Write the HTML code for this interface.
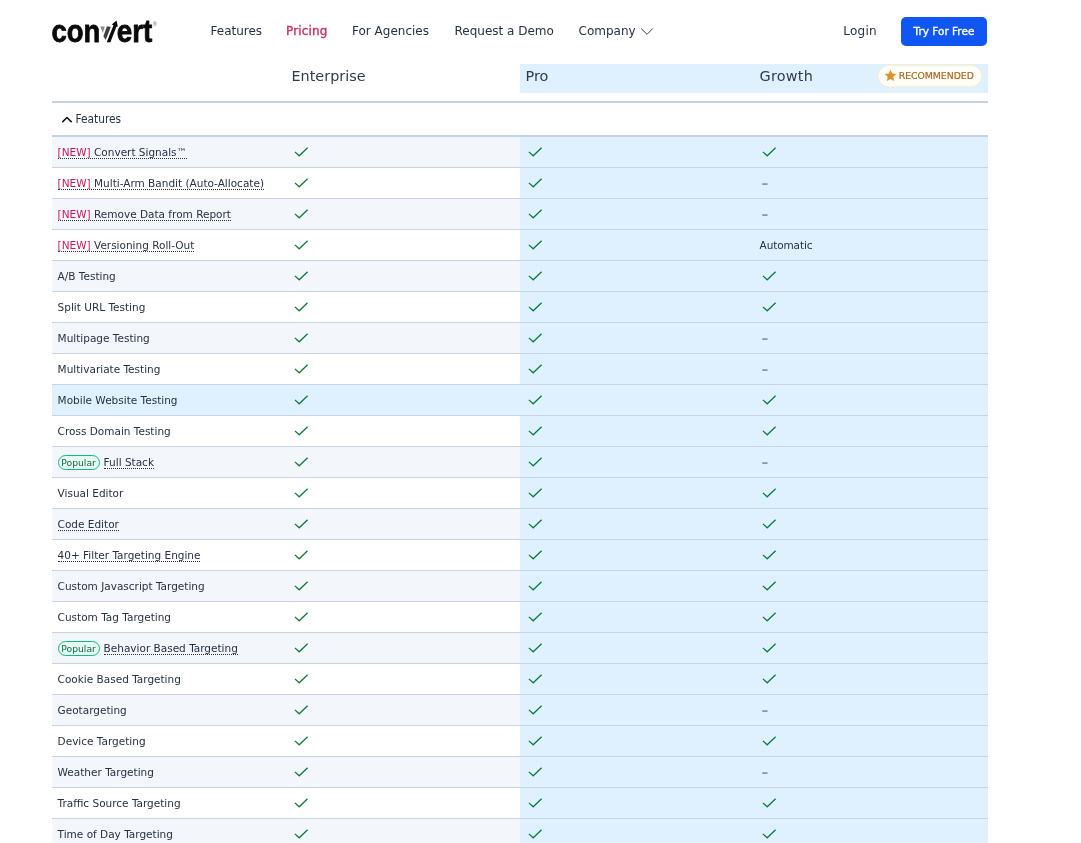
<!DOCTYPE html>
<html lang="en">
<head>
<meta charset="utf-8">
<title>Convert Pricing</title>
<style>
*{box-sizing:border-box;margin:0;padding:0}
html,body{width:1081px;height:843px;overflow:hidden;background:#fff}
body{font-family:"DejaVu Sans","Liberation Sans",sans-serif;color:#1f2937;position:relative}
.nav{position:absolute;left:0;top:0;width:1081px;height:64px}
.logo{position:absolute;left:45px;top:12px;width:120px;height:40px}
.logo text{font-family:"Liberation Sans",sans-serif;font-weight:700;fill:#0a0a0a;stroke:#0a0a0a;stroke-width:.8px;stroke-linejoin:round}
.nav a{position:absolute;top:22px;font-size:12px;line-height:18px;color:#273142;text-decoration:none;white-space:nowrap}
.nav a.act{color:#c82e5e;-webkit-text-stroke:.35px #c82e5e;letter-spacing:.15px}
.chev{position:absolute;left:640px;top:27px;width:14px;height:9px;fill:none;stroke:#374151;stroke-width:1}
.btn{position:absolute;left:901px;top:17px;width:86px;height:29px;border-radius:5px;background:#0f56f3;color:#fff;font-size:10.5px;line-height:29px;text-align:center;-webkit-text-stroke:.35px #fff}
.hdr{position:absolute;left:52px;top:64px;width:936px;height:29px;display:flex}
.hdr div{width:234px;height:29px;padding-left:5.5px;font-size:14.4px;line-height:24px;color:#323b49}
.hdr .b{background:#dff1fe}
.rec{position:absolute;left:878px;top:65px;width:104px;height:22px;border-radius:11px;background:#fffef9;border:1px solid #fdf1c5;color:#a8621a;font-size:9.3px;line-height:20px;padding-left:19.7px;white-space:nowrap;-webkit-text-stroke:.15px #a8621a}
.rec svg{position:absolute;left:4.6px;top:2.6px;width:13px;height:13px;fill:#e0922a}
.tbl{position:absolute;left:52px;top:101px;width:936px}
.nav,.hdr,.rec,.tbl{will-change:transform}
.sec{height:36px;border-top:2px solid #c6d2e1;border-bottom:2px solid #c6d2e1;font-family:"DejaVu Sans Condensed","DejaVu Sans",sans-serif;font-size:11.8px;line-height:32px;padding-left:23.5px;position:relative;color:#273142}
.sec svg{position:absolute;left:9px;top:13px;width:12px;height:8px;fill:none;stroke:#111;stroke-width:1.5}
.r{display:flex;height:31px;border-bottom:1px solid #c9d3e0;position:relative}
.r.alt{background:#f3f6fb}
.c{width:234px;height:30px;padding-left:5.6px;font-size:10.5px;line-height:30px;white-space:nowrap;color:#273142}
.c.b{background:#dff1fe}
.r.hov{background:#dff1fe}
.ck{width:16px;height:16px;display:block;margin-top:7px;margin-left:1.4px;fill:none;stroke:#0c7a3e;stroke-width:1.25;stroke-linecap:butt;stroke-linejoin:miter}
.dash{color:#8d97a6;padding-left:2px;font-weight:700;font-size:13.5px;position:relative;top:0px}
.val{letter-spacing:-.12px}
.tip{border-bottom:1px dotted #273142}
.new{color:#c2185b}
.pop{display:inline-block;width:42px;height:15px;line-height:14px;border:1px solid #10b981;border-radius:8px;background:#e6faf1;color:#17634a;font-size:9.2px;text-align:center;margin-right:4px;vertical-align:0px}
</style>
</head>
<body>
<div class="nav">
  <svg class="logo" viewBox="0 0 120 40" aria-label="convert">
    <text x="6.5" y="30" font-size="31.5" textLength="48.8" lengthAdjust="spacingAndGlyphs">con</text>
    <text x="56" y="30" font-size="31.5" style="fill:none;stroke:none">v</text>
    <polygon points="55.3,14.6 59.7,14.6 57.8,21" fill="#8a8a8a"/>
    <polygon points="62,14.2 65.8,15 60.8,27.8 58.4,24.2" fill="#3f3f3f"/>
    <polygon points="61.7,30.2 65.4,30.2 71.3,15 72.8,14.5 71.5,8.5 66.8,12.5 68.5,13.3" fill="#0a0a0a"/>
    <text x="71.8" y="30" font-size="31.5" textLength="35.6" lengthAdjust="spacingAndGlyphs">ert</text>
    <text x="108" y="14" font-size="5" style="font-weight:400;fill:#555;stroke:none">®</text>
  </svg>
  <a style="left:210.5px">Features</a>
  <a class="act" style="left:286px">Pricing</a>
  <a style="left:352px">For Agencies</a>
  <a style="left:454.5px">Request a Demo</a>
  <a style="left:578.5px">Company</a>
  <svg class="chev" viewBox="0 0 14 9"><path d="M1.2 1.5 L7 7.3 L12.8 1.5"/></svg>
  <a style="left:843.3px;letter-spacing:.25px">Login</a>
  <div class="btn">Try For Free</div>
</div>
<div class="hdr"><div></div><div>Enterprise</div><div class="b">Pro</div><div class="b" style="letter-spacing:.25px">Growth</div></div>
<div class="rec"><svg viewBox="0 0 24 24"><path d="M12 1.5l3.2 6.9 7.5.9-5.5 5.2 1.4 7.5L12 18.3 5.4 22l1.4-7.5L1.3 9.3l7.5-.9z"/></svg>RECOMMENDED</div>
<div class="tbl">
<div class="sec"><svg viewBox="0 0 12 8"><path d="M1.3 6.1 L6 1.5 L10.7 6.1"/></svg>Features</div>
<div class="r alt"><div class="c c1"><span class="tip"><span class="new">[NEW]</span> Convert Signals™</span></div><div class="c"><svg class="ck" viewBox="0 0 16 16"><path d="M1.9 7.9 L6.2 11.8 L14.6 3.7"/></svg></div><div class="c b"><svg class="ck" viewBox="0 0 16 16"><path d="M1.9 7.9 L6.2 11.8 L14.6 3.7"/></svg></div><div class="c b"><svg class="ck" viewBox="0 0 16 16"><path d="M1.9 7.9 L6.2 11.8 L14.6 3.7"/></svg></div></div>
<div class="r"><div class="c c1"><span class="tip"><span class="new">[NEW]</span> Multi-Arm Bandit (Auto-Allocate)</span></div><div class="c"><svg class="ck" viewBox="0 0 16 16"><path d="M1.9 7.9 L6.2 11.8 L14.6 3.7"/></svg></div><div class="c b"><svg class="ck" viewBox="0 0 16 16"><path d="M1.9 7.9 L6.2 11.8 L14.6 3.7"/></svg></div><div class="c b"><span class="dash">–</span></div></div>
<div class="r alt"><div class="c c1"><span class="tip"><span class="new">[NEW]</span> Remove Data from Report</span></div><div class="c"><svg class="ck" viewBox="0 0 16 16"><path d="M1.9 7.9 L6.2 11.8 L14.6 3.7"/></svg></div><div class="c b"><svg class="ck" viewBox="0 0 16 16"><path d="M1.9 7.9 L6.2 11.8 L14.6 3.7"/></svg></div><div class="c b"><span class="dash">–</span></div></div>
<div class="r"><div class="c c1"><span class="tip"><span class="new">[NEW]</span> Versioning Roll-Out</span></div><div class="c"><svg class="ck" viewBox="0 0 16 16"><path d="M1.9 7.9 L6.2 11.8 L14.6 3.7"/></svg></div><div class="c b"><svg class="ck" viewBox="0 0 16 16"><path d="M1.9 7.9 L6.2 11.8 L14.6 3.7"/></svg></div><div class="c b"><span class="val">Automatic</span></div></div>
<div class="r alt"><div class="c c1">A/B Testing</div><div class="c"><svg class="ck" viewBox="0 0 16 16"><path d="M1.9 7.9 L6.2 11.8 L14.6 3.7"/></svg></div><div class="c b"><svg class="ck" viewBox="0 0 16 16"><path d="M1.9 7.9 L6.2 11.8 L14.6 3.7"/></svg></div><div class="c b"><svg class="ck" viewBox="0 0 16 16"><path d="M1.9 7.9 L6.2 11.8 L14.6 3.7"/></svg></div></div>
<div class="r"><div class="c c1">Split URL Testing</div><div class="c"><svg class="ck" viewBox="0 0 16 16"><path d="M1.9 7.9 L6.2 11.8 L14.6 3.7"/></svg></div><div class="c b"><svg class="ck" viewBox="0 0 16 16"><path d="M1.9 7.9 L6.2 11.8 L14.6 3.7"/></svg></div><div class="c b"><svg class="ck" viewBox="0 0 16 16"><path d="M1.9 7.9 L6.2 11.8 L14.6 3.7"/></svg></div></div>
<div class="r alt"><div class="c c1">Multipage Testing</div><div class="c"><svg class="ck" viewBox="0 0 16 16"><path d="M1.9 7.9 L6.2 11.8 L14.6 3.7"/></svg></div><div class="c b"><svg class="ck" viewBox="0 0 16 16"><path d="M1.9 7.9 L6.2 11.8 L14.6 3.7"/></svg></div><div class="c b"><span class="dash">–</span></div></div>
<div class="r"><div class="c c1">Multivariate Testing</div><div class="c"><svg class="ck" viewBox="0 0 16 16"><path d="M1.9 7.9 L6.2 11.8 L14.6 3.7"/></svg></div><div class="c b"><svg class="ck" viewBox="0 0 16 16"><path d="M1.9 7.9 L6.2 11.8 L14.6 3.7"/></svg></div><div class="c b"><span class="dash">–</span></div></div>
<div class="r alt hov"><div class="c c1">Mobile Website Testing</div><div class="c"><svg class="ck" viewBox="0 0 16 16"><path d="M1.9 7.9 L6.2 11.8 L14.6 3.7"/></svg></div><div class="c b"><svg class="ck" viewBox="0 0 16 16"><path d="M1.9 7.9 L6.2 11.8 L14.6 3.7"/></svg></div><div class="c b"><svg class="ck" viewBox="0 0 16 16"><path d="M1.9 7.9 L6.2 11.8 L14.6 3.7"/></svg></div></div>
<div class="r"><div class="c c1">Cross Domain Testing</div><div class="c"><svg class="ck" viewBox="0 0 16 16"><path d="M1.9 7.9 L6.2 11.8 L14.6 3.7"/></svg></div><div class="c b"><svg class="ck" viewBox="0 0 16 16"><path d="M1.9 7.9 L6.2 11.8 L14.6 3.7"/></svg></div><div class="c b"><svg class="ck" viewBox="0 0 16 16"><path d="M1.9 7.9 L6.2 11.8 L14.6 3.7"/></svg></div></div>
<div class="r alt"><div class="c c1"><span class="pop">Popular</span><span class="tip">Full Stack</span></div><div class="c"><svg class="ck" viewBox="0 0 16 16"><path d="M1.9 7.9 L6.2 11.8 L14.6 3.7"/></svg></div><div class="c b"><svg class="ck" viewBox="0 0 16 16"><path d="M1.9 7.9 L6.2 11.8 L14.6 3.7"/></svg></div><div class="c b"><span class="dash">–</span></div></div>
<div class="r"><div class="c c1">Visual Editor</div><div class="c"><svg class="ck" viewBox="0 0 16 16"><path d="M1.9 7.9 L6.2 11.8 L14.6 3.7"/></svg></div><div class="c b"><svg class="ck" viewBox="0 0 16 16"><path d="M1.9 7.9 L6.2 11.8 L14.6 3.7"/></svg></div><div class="c b"><svg class="ck" viewBox="0 0 16 16"><path d="M1.9 7.9 L6.2 11.8 L14.6 3.7"/></svg></div></div>
<div class="r alt"><div class="c c1"><span class="tip">Code Editor</span></div><div class="c"><svg class="ck" viewBox="0 0 16 16"><path d="M1.9 7.9 L6.2 11.8 L14.6 3.7"/></svg></div><div class="c b"><svg class="ck" viewBox="0 0 16 16"><path d="M1.9 7.9 L6.2 11.8 L14.6 3.7"/></svg></div><div class="c b"><svg class="ck" viewBox="0 0 16 16"><path d="M1.9 7.9 L6.2 11.8 L14.6 3.7"/></svg></div></div>
<div class="r"><div class="c c1"><span class="tip">40+ Filter Targeting Engine</span></div><div class="c"><svg class="ck" viewBox="0 0 16 16"><path d="M1.9 7.9 L6.2 11.8 L14.6 3.7"/></svg></div><div class="c b"><svg class="ck" viewBox="0 0 16 16"><path d="M1.9 7.9 L6.2 11.8 L14.6 3.7"/></svg></div><div class="c b"><svg class="ck" viewBox="0 0 16 16"><path d="M1.9 7.9 L6.2 11.8 L14.6 3.7"/></svg></div></div>
<div class="r alt"><div class="c c1">Custom Javascript Targeting</div><div class="c"><svg class="ck" viewBox="0 0 16 16"><path d="M1.9 7.9 L6.2 11.8 L14.6 3.7"/></svg></div><div class="c b"><svg class="ck" viewBox="0 0 16 16"><path d="M1.9 7.9 L6.2 11.8 L14.6 3.7"/></svg></div><div class="c b"><svg class="ck" viewBox="0 0 16 16"><path d="M1.9 7.9 L6.2 11.8 L14.6 3.7"/></svg></div></div>
<div class="r"><div class="c c1">Custom Tag Targeting</div><div class="c"><svg class="ck" viewBox="0 0 16 16"><path d="M1.9 7.9 L6.2 11.8 L14.6 3.7"/></svg></div><div class="c b"><svg class="ck" viewBox="0 0 16 16"><path d="M1.9 7.9 L6.2 11.8 L14.6 3.7"/></svg></div><div class="c b"><svg class="ck" viewBox="0 0 16 16"><path d="M1.9 7.9 L6.2 11.8 L14.6 3.7"/></svg></div></div>
<div class="r alt"><div class="c c1"><span class="pop">Popular</span><span class="tip">Behavior Based Targeting</span></div><div class="c"><svg class="ck" viewBox="0 0 16 16"><path d="M1.9 7.9 L6.2 11.8 L14.6 3.7"/></svg></div><div class="c b"><svg class="ck" viewBox="0 0 16 16"><path d="M1.9 7.9 L6.2 11.8 L14.6 3.7"/></svg></div><div class="c b"><svg class="ck" viewBox="0 0 16 16"><path d="M1.9 7.9 L6.2 11.8 L14.6 3.7"/></svg></div></div>
<div class="r"><div class="c c1">Cookie Based Targeting</div><div class="c"><svg class="ck" viewBox="0 0 16 16"><path d="M1.9 7.9 L6.2 11.8 L14.6 3.7"/></svg></div><div class="c b"><svg class="ck" viewBox="0 0 16 16"><path d="M1.9 7.9 L6.2 11.8 L14.6 3.7"/></svg></div><div class="c b"><svg class="ck" viewBox="0 0 16 16"><path d="M1.9 7.9 L6.2 11.8 L14.6 3.7"/></svg></div></div>
<div class="r alt"><div class="c c1">Geotargeting</div><div class="c"><svg class="ck" viewBox="0 0 16 16"><path d="M1.9 7.9 L6.2 11.8 L14.6 3.7"/></svg></div><div class="c b"><svg class="ck" viewBox="0 0 16 16"><path d="M1.9 7.9 L6.2 11.8 L14.6 3.7"/></svg></div><div class="c b"><span class="dash">–</span></div></div>
<div class="r"><div class="c c1">Device Targeting</div><div class="c"><svg class="ck" viewBox="0 0 16 16"><path d="M1.9 7.9 L6.2 11.8 L14.6 3.7"/></svg></div><div class="c b"><svg class="ck" viewBox="0 0 16 16"><path d="M1.9 7.9 L6.2 11.8 L14.6 3.7"/></svg></div><div class="c b"><svg class="ck" viewBox="0 0 16 16"><path d="M1.9 7.9 L6.2 11.8 L14.6 3.7"/></svg></div></div>
<div class="r alt"><div class="c c1">Weather Targeting</div><div class="c"><svg class="ck" viewBox="0 0 16 16"><path d="M1.9 7.9 L6.2 11.8 L14.6 3.7"/></svg></div><div class="c b"><svg class="ck" viewBox="0 0 16 16"><path d="M1.9 7.9 L6.2 11.8 L14.6 3.7"/></svg></div><div class="c b"><span class="dash">–</span></div></div>
<div class="r"><div class="c c1">Traffic Source Targeting</div><div class="c"><svg class="ck" viewBox="0 0 16 16"><path d="M1.9 7.9 L6.2 11.8 L14.6 3.7"/></svg></div><div class="c b"><svg class="ck" viewBox="0 0 16 16"><path d="M1.9 7.9 L6.2 11.8 L14.6 3.7"/></svg></div><div class="c b"><svg class="ck" viewBox="0 0 16 16"><path d="M1.9 7.9 L6.2 11.8 L14.6 3.7"/></svg></div></div>
<div class="r alt"><div class="c c1">Time of Day Targeting</div><div class="c"><svg class="ck" viewBox="0 0 16 16"><path d="M1.9 7.9 L6.2 11.8 L14.6 3.7"/></svg></div><div class="c b"><svg class="ck" viewBox="0 0 16 16"><path d="M1.9 7.9 L6.2 11.8 L14.6 3.7"/></svg></div><div class="c b"><svg class="ck" viewBox="0 0 16 16"><path d="M1.9 7.9 L6.2 11.8 L14.6 3.7"/></svg></div></div>
</div>
</body>
</html>
